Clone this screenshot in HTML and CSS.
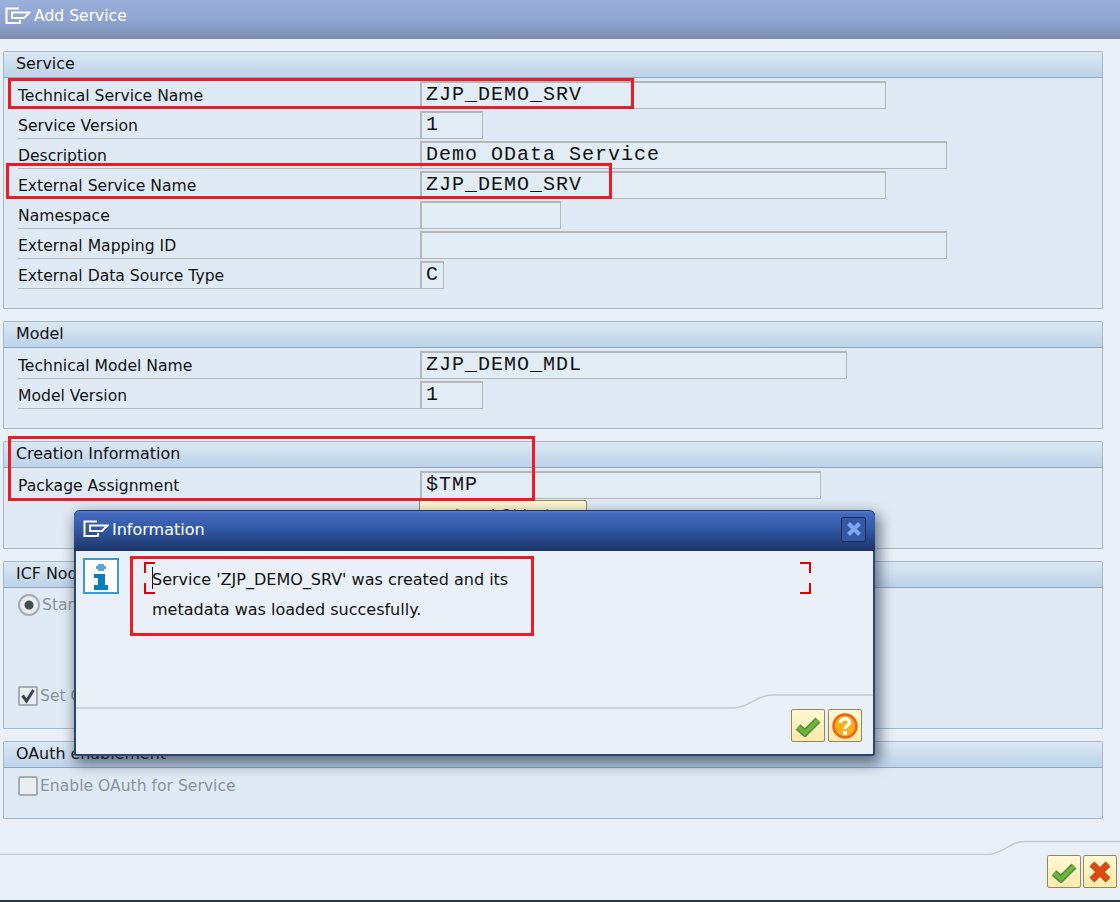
FILE: index.html
```html
<!DOCTYPE html>
<html>
<head>
  <title>Add Service</title>
  <link rel="stylesheet" href="styles.css">
</head>
<body>
  <div class="screen">
    <!-- Title bar -->
    <div class="titlebar">
      <svg class="win-icon" width="26" height="18" viewBox="0 0 26 18"><path d="M14 1.5H1.5V16H15V13M7 5.5H24.5L19 11H7Z" fill="none" stroke="#fff" stroke-width="2"/></svg>
      <span>Add Service</span>
    </div>

    <div class="content">
      <!-- Service -->
      <div class="group group-service">
        <div class="group-head">Service</div>
        <div class="row"><label>Technical Service Name</label><div class="field w-466">ZJP_DEMO_SRV</div></div>
        <div class="row"><label>Service Version</label><div class="field w-63">1</div></div>
        <div class="row"><label>Description</label><div class="field w-527">Demo OData Service</div></div>
        <div class="row"><label>External Service Name</label><div class="field w-466">ZJP_DEMO_SRV</div></div>
        <div class="row"><label>Namespace</label><div class="field w-141"></div></div>
        <div class="row"><label>External Mapping ID</label><div class="field w-527"></div></div>
        <div class="row"><label>External Data Source Type</label><div class="field w-24">C</div></div>
      </div>

      <!-- Model -->
      <div class="group group-model">
        <div class="group-head">Model</div>
        <div class="row"><label>Technical Model Name</label><div class="field w-427">ZJP_DEMO_MDL</div></div>
        <div class="row"><label>Model Version</label><div class="field w-63">1</div></div>
      </div>

      <!-- Creation information -->
      <div class="group group-creation">
        <div class="group-head">Creation Information</div>
        <div class="row"><label>Package Assignment</label><div class="field w-401">$TMP</div></div>
        <div class="row-btn"><button class="local-btn" type="button">Local Object</button></div>
      </div>

      <!-- ICF node -->
      <div class="group group-icf">
        <div class="group-head">ICF Node</div>
        <div class="opt opt-radio"><span class="radio"></span>Standard Mode</div>
        <div class="opt opt-set">
          <span class="check"><svg width="16" height="16" viewBox="0 0 16 16"><path d="M2.5 7.5L6.5 13L13.5 2" fill="none" stroke="#3c4650" stroke-width="3"/></svg></span>Set Current Client as Default
        </div>
      </div>

      <!-- OAuth -->
      <div class="group group-oauth">
        <div class="group-head">OAuth enablement</div>
        <div class="opt opt-oauth"><span class="check"></span>Enable OAuth for Service</div>
      </div>
    </div>

    <!-- Bottom toolbar -->
    <div class="footer">
      <svg class="curve" width="1120" height="15" viewBox="0 0 1120 15"><path d="M0 14.5H988C998 14.5 1006 7 1016 3C1019 2 1022 1.5 1026 1.5H1120" fill="none" stroke="#c2c9d4" stroke-width="1.4"/></svg>
      <div class="footer-btns">
        <button class="icon-btn" type="button"><svg width="26" height="22" viewBox="0 0 26 22"><path class="ok" d="M3 12L10 18L23 5"/><path class="ok-in" d="M3 12L10 18L23 5"/></svg></button>
        <button class="icon-btn" type="button"><svg width="24" height="24" viewBox="0 0 24 24"><path class="no" d="M4 4L20 20M20 4L4 20"/><path class="no-in" d="M4 4L20 20M20 4L4 20"/></svg></button>
      </div>
    </div>

    <!-- Information dialog -->
    <div class="dialog">
      <div class="dialog-title">
        <svg class="win-icon" width="26" height="18" viewBox="0 0 26 18"><path d="M14 1.5H1.5V16H15V13M7 5.5H24.5L19 11H7Z" fill="none" stroke="#fff" stroke-width="2"/></svg>
        <span>Information</span>
        <div class="close"><svg width="16" height="16" viewBox="0 0 16 16"><path d="M2.5 2.5L13.5 13.5M13.5 2.5L2.5 13.5" stroke="#7fa8f4" stroke-width="4"/></svg></div>
      </div>
      <div class="dialog-body">
        <div class="info-icon">
          <svg width="36" height="36" viewBox="0 0 36 36"><rect x="1" y="1" width="34" height="34" fill="#fff" stroke="#3c9ad0" stroke-width="2"/><path d="M15 6H21V8H23V11H21V13H15V11H13V8H15Z" fill="#5aa6dc"/><path d="M11 16H22V27H25V32H11V27H15V20H11Z" fill="#0a7dbf"/></svg>
        </div>
        <p class="msg">Service 'ZJP_DEMO_SRV' was created and its<br>metadata was loaded succesfully.</p>
      </div>
      <div class="dialog-foot">
        <svg class="curve" width="797" height="15" viewBox="0 0 797 15"><path d="M0 14H658C668 14 676 7 686 3C689 2 692 1 696 1H797" fill="none" stroke="#c2c9d4" stroke-width="1.4"/></svg>
        <div class="dialog-btns">
          <button class="icon-btn" type="button"><svg width="26" height="22" viewBox="0 0 26 22"><path class="ok" d="M3 12L10 18L23 5"/><path class="ok-in" d="M3 12L10 18L23 5"/></svg></button>
          <button class="icon-btn" type="button"><svg width="28" height="28" viewBox="0 0 28 28"><circle cx="14" cy="14" r="11.5" fill="#fcae14" stroke="#e8641a" stroke-width="2.5"/><path d="M9.5 11C9.5 5.5 18.5 5.5 18.5 10.5C18.5 13.5 14 13.5 14 17" fill="none" stroke="#fff" stroke-width="3.5"/><rect x="12" y="19" width="4" height="4" fill="#fff"/></svg></button>
        </div>
      </div>
    </div>

    <!-- Red annotations -->
    <div class="mark mark-1"></div>
    <div class="mark mark-2"></div>
    <div class="mark mark-3"></div>
    <div class="mark mark-4"></div>
    <div class="corner corner-l"></div>
    <div class="corner corner-r"></div>
    <div class="caret"></div>
  </div>
</body>
</html>
```

FILE: styles.css
```css
/* Add Service screen */
* {
  box-sizing: border-box;
}
body {
  margin: 0;
  font-family: "DejaVu Sans", sans-serif;
  font-size: 15.6px;
  color: #111;
}
.screen {
  position: relative;
  width: 1120px;
  height: 902px;
  overflow: hidden;
  display: flex;
  flex-direction: column;
  background-color: #e9f0f7;
  border-bottom: 2px solid #2a3240;
}
.titlebar {
  height: 39px;
  flex: none;
  display: flex;
  align-items: center;
  gap: 3px;
  padding: 0 0 7px 5px;
  color: #fff;
  font-size: 15.6px;
  background: linear-gradient(#9cb0dc, #8fa4d0 50%, #7c8fb2);
}
.content {
  flex: 1;
  display: flex;
  flex-direction: column;
  gap: 12px;
  padding: 12px 17px 0 3px;
}

/* Group boxes */
.group {
  border: 1px solid #a4b8cc;
  border-radius: 2px 2px 0 0;
  background-color: #dfeaf4;
}
.group-service { height: 258px; }
.group-model { height: 108px; }
.group-creation { height: 108px; }
.group-icf { height: 168px; }
.group-oauth { height: 78px; }
.group-head {
  height: 26px;
  margin-bottom: 1px;
  padding: 0 0 2px 12px;
  display: flex;
  align-items: center;
  font-size: 15.9px;
  background: linear-gradient(#dce8f3, #bcd3e8);
  border-bottom: 1px solid #8ea8c4;
}
.row {
  height: 30px;
  display: flex;
  padding-left: 14px;
}
.row label {
  width: 402px;
  height: 30px;
  padding-top: 8px;
  border-bottom: 1px solid #b6b9bc;
}
.field {
  height: 28px;
  margin-top: 2px;
  padding: 0 0 0 4px;
  font-family: "Liberation Mono", monospace;
  font-size: 20px;
  letter-spacing: 1px;
  background-color: #e2ecf5;
  border: 2px solid #b4b8bb;
  border-right-width: 1px;
  border-bottom-width: 1px;
}
.w-466 { width: 466px; }
.w-63 { width: 63px; }
.w-527 { width: 527px; }
.w-141 { width: 141px; }
.w-24 { width: 24px; }
.w-427 { width: 427px; }
.w-401 { width: 401px; }
.row-btn {
  padding: 1px 0 0 415px;
}
.local-btn {
  width: 168px;
  height: 32px;
  margin: 0;
  font-family: inherit;
  font-size: 15.6px;
  color: #111;
  background: linear-gradient(#fff9d4, #fdeaa8);
  border: 1px solid #8f8a66;
  border-radius: 2px;
}

/* Disabled options */
.opt {
  display: flex;
  align-items: center;
  gap: 2px;
  padding-left: 14px;
  color: #8b939b;
}
.opt-radio { margin-top: 6px; }
.opt-set { margin-top: 70px; }
.opt-oauth { margin-top: 8px; }
.radio {
  width: 22px;
  height: 22px;
  border: 2px solid #a6acb2;
  border-radius: 50%;
  background: radial-gradient(circle, #444c54 0 4px, #e8edf2 5px);
}
.check {
  width: 20px;
  height: 20px;
  display: flex;
  align-items: center;
  justify-content: center;
  border: 2px solid #a6acb2;
  border-radius: 2px;
  background-color: #e8edf2;
}

/* Bottom toolbar */
.footer {
  flex: none;
  height: 60px;
  position: relative;
}
.curve {
  display: block;
}
.footer-btns {
  display: flex;
  justify-content: flex-end;
  gap: 2px;
  padding: 0 3px 0 0;
}
.icon-btn {
  width: 34px;
  height: 33px;
  padding: 0;
  display: flex;
  align-items: center;
  justify-content: center;
  background: linear-gradient(#fff9d4, #fdeaa8);
  border: 1px solid #8f8a66;
  border-radius: 2px;
}
.ok, .ok-in, .no, .no-in {
  fill: none;
}
.ok {
  stroke: #4a8a5c;
  stroke-width: 7;
}
.ok-in {
  stroke: #74b52c;
  stroke-width: 4;
}
.no {
  stroke: #c0501c;
  stroke-width: 7;
}
.no-in {
  stroke: #dd4a12;
  stroke-width: 4;
}

/* Information dialog */
.dialog {
  position: absolute;
  left: 74px;
  top: 510px;
  width: 801px;
  height: 246px;
  display: flex;
  flex-direction: column;
  background-color: #e9f0f7;
  border: 2px solid #2c4478;
  border-top: none;
  border-radius: 6px 6px 3px 3px;
  box-shadow: 3px 6px 14px 2px rgba(30, 40, 60, 0.6);
}
.dialog-title {
  height: 41px;
  flex: none;
  display: flex;
  align-items: center;
  gap: 3px;
  margin: 0 -2px;
  padding: 0 0 4px 9px;
  color: #fff;
  font-size: 16px;
  border-top: 1px solid #1f3568;
  border-radius: 6px 6px 0 0;
  background: linear-gradient(#5a7cc8 0, #4268bc 3px, #345ca8 40%, #1c3468);
}
.close {
  width: 25px;
  height: 25px;
  margin-left: auto;
  margin-right: 9px;
  display: flex;
  align-items: center;
  justify-content: center;
  border: 1px solid #1a2c58;
  border-radius: 2px;
  background-color: #3458a4;
}
.dialog-body {
  flex: 1;
  display: flex;
  padding: 7px 0 0 7px;
}
.info-icon {
  height: 36px;
}
.msg {
  margin: 7px 0 0 33px;
  font-size: 16px;
  line-height: 30px;
}
.dialog-foot {
  height: 60px;
  flex: none;
}
.dialog-btns {
  display: flex;
  justify-content: flex-end;
  gap: 3px;
  padding-right: 11px;
}

/* Red annotations drawn on top of the screenshot */
.mark {
  position: absolute;
  border: 3px solid #ed1c24;
}
.mark-1 { left: 8px; top: 78px; width: 626px; height: 31px; }
.mark-2 { left: 6px; top: 163px; width: 606px; height: 36px; }
.mark-3 { left: 8px; top: 436px; width: 527px; height: 65px; }
.mark-4 { left: 130px; top: 556px; width: 404px; height: 80px; }
.corner {
  position: absolute;
  top: 562px;
  width: 9px;
  height: 32px;
}
.corner-l { left: 144px; }
.corner-r { left: 800px; }
.corner::before,
.corner::after {
  content: "";
  position: absolute;
  left: 0;
  width: 9px;
  height: 9px;
  border: 0 solid #e00000;
}
.corner::before { top: 0; border-top-width: 2px; }
.corner::after { bottom: 0; border-bottom-width: 2px; }
.corner-l::before, .corner-l::after { border-left-width: 2px; }
.corner-r::before, .corner-r::after { border-right-width: 2px; }
.caret {
  position: absolute;
  left: 152px;
  top: 567px;
  width: 1px;
  height: 22px;
  background-color: #111;
}
```
